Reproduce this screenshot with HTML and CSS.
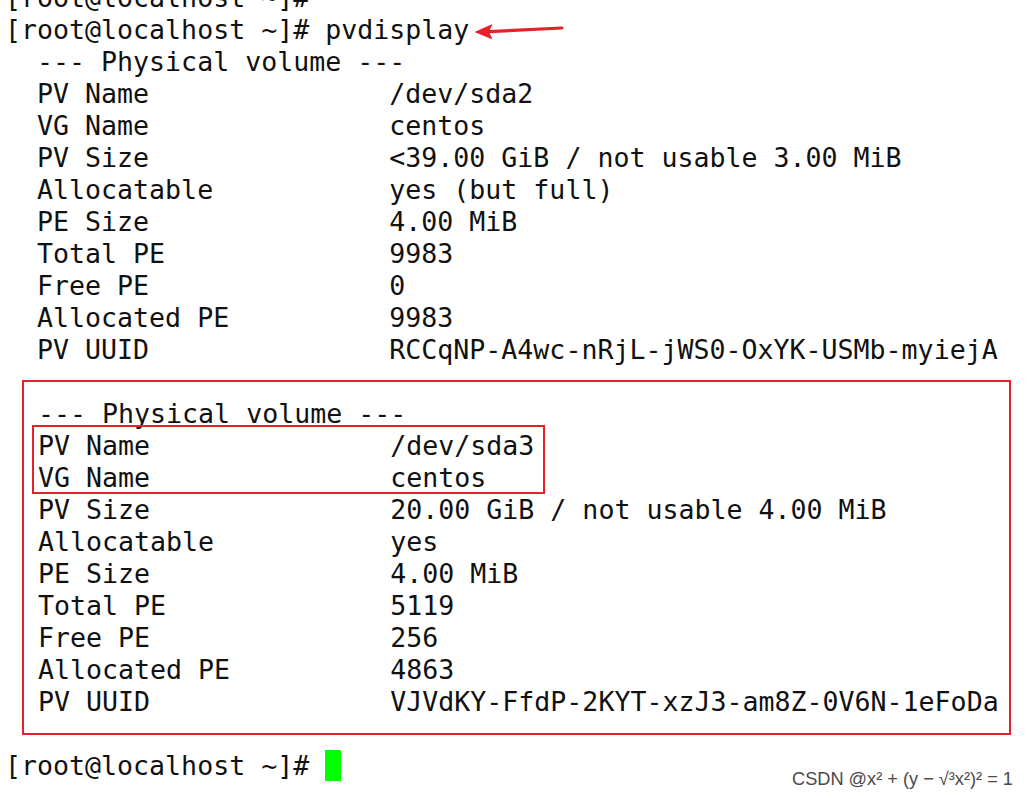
FILE: index.html
```html
<!DOCTYPE html>
<html lang="en">
<head>
<meta charset="utf-8">
<title>pvdisplay</title>
<link rel="stylesheet" href="styles.css">
</head>
<body>
<div class="term">
  <div class="ln">[root@localhost ~]#</div>
  <div class="ln cmd">[root@localhost ~]# pvdisplay<svg class="arrow" width="100" height="24" viewBox="0 0 100 24"><path d="M20 11.6 L93 8" stroke="#e8202a" stroke-width="3.2" stroke-linecap="round" fill="none"/><path d="M5.5 12 L23.5 4 L20 11.8 L23.5 19.5 Z" fill="#e8202a"/></svg></div>
  <div class="ln">  --- Physical volume ---</div>
  <div class="ln">  PV Name               /dev/sda2</div>
  <div class="ln">  VG Name               centos</div>
  <div class="ln">  PV Size               &lt;39.00 GiB / not usable 3.00 MiB</div>
  <div class="ln">  Allocatable           yes (but full)</div>
  <div class="ln">  PE Size               4.00 MiB</div>
  <div class="ln">  Total PE              9983</div>
  <div class="ln">  Free PE               0</div>
  <div class="ln">  Allocated PE          9983</div>
  <div class="ln">  PV UUID               RCCqNP-A4wc-nRjL-jWS0-OxYK-USMb-myiejA</div>
  <div class="box">
    <div class="ln">--- Physical volume ---</div>
    <div class="hl">
      <div class="ln">PV Name               /dev/sda3</div>
      <div class="ln">VG Name               centos</div>
    </div>
    <div class="ln">PV Size               20.00 GiB / not usable 4.00 MiB</div>
    <div class="ln">Allocatable           yes</div>
    <div class="ln">PE Size               4.00 MiB</div>
    <div class="ln">Total PE              5119</div>
    <div class="ln">Free PE               256</div>
    <div class="ln">Allocated PE          4863</div>
    <div class="ln">PV UUID               VJVdKY-FfdP-2KYT-xzJ3-am8Z-0V6N-1eFoDa</div>
  </div>
  <div class="ln">[root@localhost ~]# <span class="cursor"></span></div>
</div>
<div class="wm">CSDN @x² + (y − √³x²)² = 1</div>
</body>
</html>
```

FILE: styles.css
```css
html, body {
  margin: 0;
  padding: 0;
  background: #ffffff;
}

body {
  position: relative;
  width: 1030px;
  height: 799px;
  overflow: hidden;
}

.term {
  margin-top: -18px;
  padding-left: 5px;
  font-family: "DejaVu Sans Mono", monospace;
  font-size: 26.6px;
  line-height: 32px;
  color: #111111;
}

.ln {
  height: 32px;
  white-space: pre;
}

.cmd {
  position: relative;
}

.arrow {
  position: absolute;
  left: 464px;
  top: 6px;
}

.box {
  margin: 14px 0 15px 17px;
  border: 2px solid #e8202a;
  padding: 16px 0 15px 14px;
  box-sizing: content-box;
  width: 971px;
}

.hl {
  position: relative;
}

.hl::before {
  content: "";
  position: absolute;
  left: -6px;
  top: -5px;
  width: 513px;
  height: 69px;
  border: 2px solid #e8202a;
  box-sizing: border-box;
}

.cursor {
  display: inline-block;
  width: 16px;
  height: 31px;
  vertical-align: top;
  background: #00ff00;
}

.wm {
  position: absolute;
  left: 792px;
  top: 769px;
  font-family: "Liberation Sans", Arial, sans-serif;
  font-size: 18.2px;
  line-height: 20px;
  color: #4a4a4a;
  white-space: nowrap;
}
```
